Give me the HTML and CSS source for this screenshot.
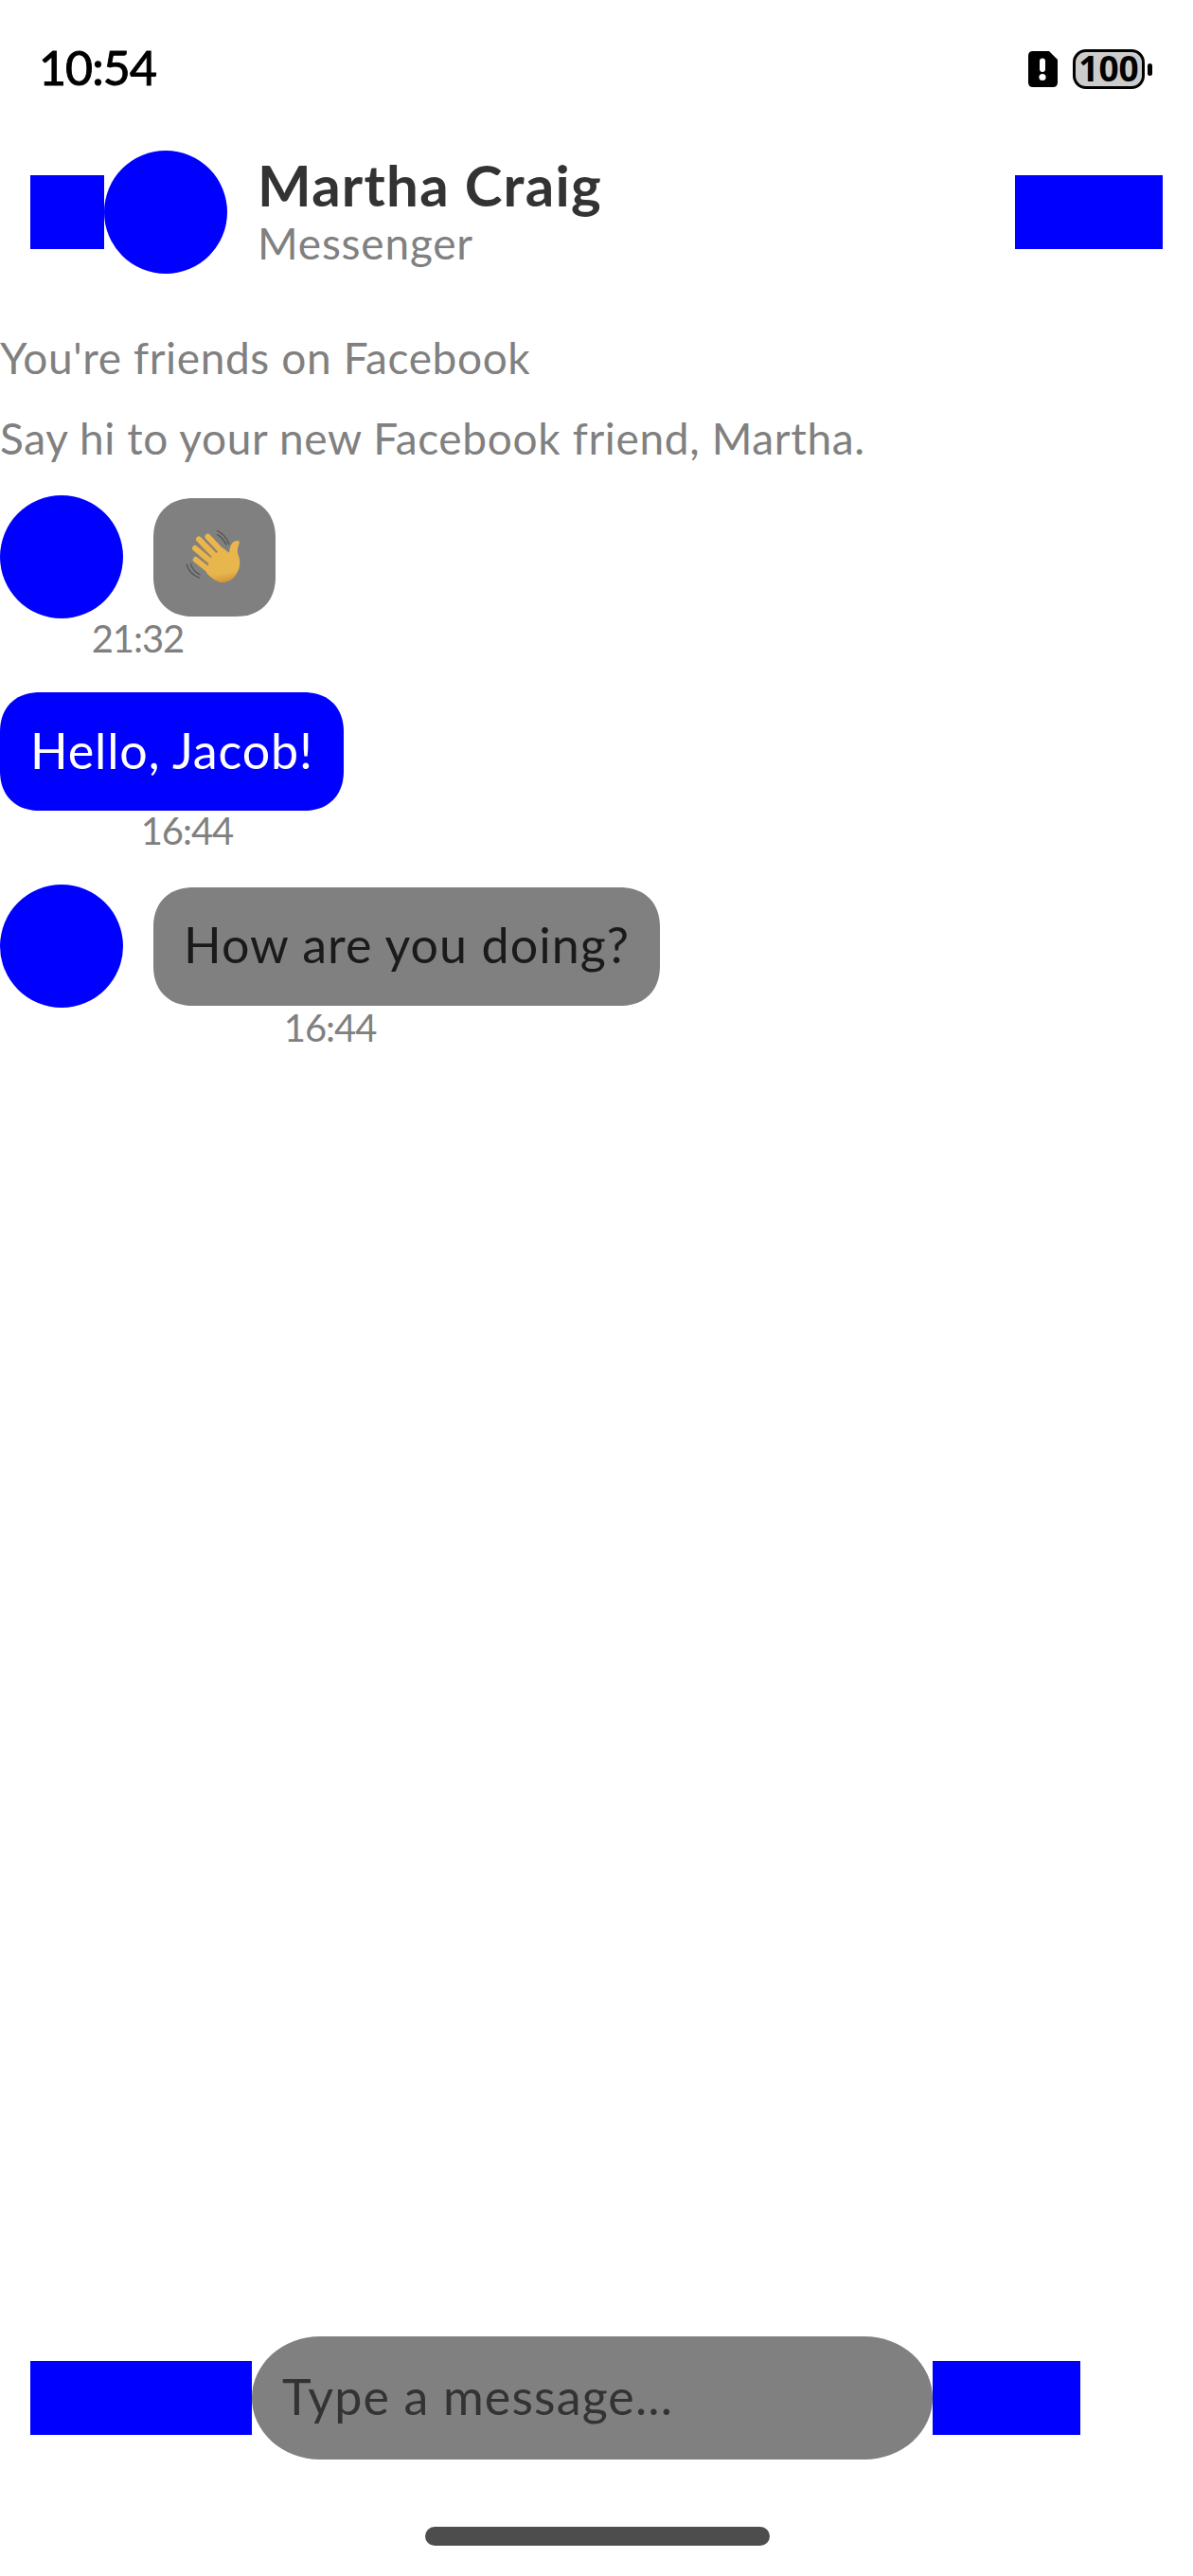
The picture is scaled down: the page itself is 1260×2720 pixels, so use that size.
FILE: index.html
```html
<!DOCTYPE html>
<html lang="en">
<head>
<meta charset="utf-8">
<title>Messenger</title>
<link rel="stylesheet" href="styles.css">
</head>
<body>
<div class="screen">
  <div class="status">
    <span class="clock">10:54</span>
    <div class="status-icons">
      <svg class="sim" viewBox="0 0 31 38"><path d="M5 0H22L31 9V33Q31 38 26 38H5Q0 38 0 33V5Q0 0 5 0Z"/><path class="mark" d="M15 10.500V19"/><circle class="dot" cx="15" cy="27.500" r="3.600"/></svg>
      <div class="battery"><span class="level">100</span></div>
      <i class="nub"></i>
    </div>
  </div>
  <header class="header">
    <div class="block back"></div>
    <div class="avatar"></div>
    <div class="who">
      <h1 class="name">Martha Craig</h1>
      <p class="app">Messenger</p>
    </div>
    <div class="block actions"></div>
  </header>
  <main class="chat">
    <p class="note">You're friends on Facebook</p>
    <p class="note note-hi">Say hi to your new Facebook friend, Martha.</p>
    <div class="message first">
      <div class="row">
        <div class="avatar"></div>
        <div class="bubble wave">
          <svg class="hand" viewBox="43.5 138 193.5 195">
            <defs><linearGradient id="skin" gradientUnits="userSpaceOnUse" x1="140" y1="160" x2="170" y2="318"><stop offset="0" stop-color="#edb64b"/><stop offset=".8" stop-color="#e6b64d"/><stop offset="1" stop-color="#d48f35"/></linearGradient></defs>
            <path class="motion" d="M149 151Q176 163 186 193M149 163Q168 174 178 196M52 258Q60 288 92 300M65 256Q72 280 94 290"/>
            <path class="fingers" d="M119 170L175 230M91 178L155 245M79 207L145 262M81 243L140 290"/>
            <path class="palm" d="M125 240L165 205L187 221Q190 182 214 183Q221 184 219 191C212 205 211 220 218 234C224 255 220 276 205 295C188 316 166 320 146 310Q132 303 115 285Z"/>
            <path class="crease" d="M122 194L146 220M98 202L130 233M92 232L121 257"/>
          </svg>
        </div>
      </div>
      <time class="time">21:32</time>
    </div>
    <div class="message second">
      <div class="row outgoing"><div class="bubble mine">Hello, Jacob!</div></div>
      <time class="time">16:44</time>
    </div>
    <div class="message third">
      <div class="row">
        <div class="avatar"></div>
        <div class="bubble theirs">How are you doing?</div>
      </div>
      <time class="time">16:44</time>
    </div>
  </main>
  <footer class="composer">
    <div class="block tools"></div>
    <div class="field">Type a message...</div>
    <div class="block extras"></div>
  </footer>
  <div class="home"><div class="home-bar"></div></div>
</div>
</body>
</html>
```
FILE: styles.css
```css
* { box-sizing: border-box; }
body, h1, p { margin: 0; }
body { background: #fff; font-family: Lato, "Liberation Sans", sans-serif; color: #1a1a1a; }
.screen { width: 1260px; height: 2720px; display: flex; flex-direction: column; overflow: hidden; }
.status { height: 146px; padding: 0 43px 0 41px; display: flex; align-items: center; justify-content: space-between; }
.clock { padding-bottom: 5px; font-size: 50px; line-height: 60px; letter-spacing: -.9px; color: #000; -webkit-text-stroke: 1px #000; }
.status-icons { display: flex; align-items: center; }
.sim { width: 31px; height: 38px; margin-right: 16px; display: block; }
.mark { stroke: #fff; stroke-width: 6; stroke-linecap: round; }
.dot { fill: #fff; }
.battery { width: 76px; height: 42px; padding-bottom: 3px; border: 3px solid #000; border-radius: 14px; background: #ccc; display: flex; align-items: center; justify-content: center; }
.level { font: 700 37px/32px "Open Sans", sans-serif; color: #000; }
.nub { width: 5px; height: 13px; border-radius: 3px; background: #000; margin-left: 3px; }
.header { height: 156px; padding: 0 32px; display: flex; align-items: center; }
.block { background: #00f; height: 78px; flex: none; }
.back { width: 78px; }
.actions { width: 156px; margin-left: auto; }
.avatar { width: 130px; height: 130px; border-radius: 50%; background: #00f; flex: none; }
.who { margin-left: 32px; padding-bottom: 4px; }
.name { font-size: 60px; line-height: 68px; letter-spacing: 1.25px; color: #333; }
.app { font-size: 46px; line-height: 55px; letter-spacing: .8px; color: #808080; }
.chat { flex: 1; min-height: 0; }
.note { font-size: 46px; line-height: 54px; letter-spacing: .62px; color: #808080; padding-top: 49px; }
.note-hi { padding-top: 31px; letter-spacing: .65px; }
.message { width: max-content; display: flex; flex-direction: column; align-items: center; }
.row { display: flex; align-items: center; gap: 32px; }
.outgoing { padding-right: 32px; }
.bubble { height: 125px; padding: 0 32px 4px; border-radius: 42px; corner-shape: superellipse(1.15); display: flex; align-items: center; font-size: 52px; line-height: 60px; background: #808080; }
.wave { padding-bottom: 0; }
.mine { background: #00f; color: #fff; letter-spacing: .86px; }
.theirs { letter-spacing: 1.03px; }
.hand { width: 65px; height: 65px; display: block; }
.motion { fill: none; stroke: #565656; stroke-width: 4; stroke-linecap: round; }
.fingers { fill: none; stroke: url(#skin); stroke-width: 18; stroke-linecap: round; }
.palm { fill: url(#skin); }
.crease { fill: none; stroke: #c98a3a; stroke-width: 2.5; stroke-linecap: round; }
.time { font-size: 40px; line-height: 42px; letter-spacing: -1.05px; color: #808080; }
.first { margin-top: 33px; }
.second, .third { margin-top: 36px; }
.composer { height: 131px; padding-left: 32px; display: flex; align-items: center; }
.tools { width: 234px; }
.field { width: 719px; height: 130px; padding: 0 32px 4px; border-radius: 72px / 65px; background: #808080; display: flex; align-items: center; font-size: 52px; line-height: 60px; letter-spacing: 1.12px; color: #333; }
.extras { width: 156px; }
.home { height: 123px; padding: 71px 0 0 449px; }
.home-bar { width: 364px; height: 20px; border-radius: 10px; background: #4d4d4d; }
```
